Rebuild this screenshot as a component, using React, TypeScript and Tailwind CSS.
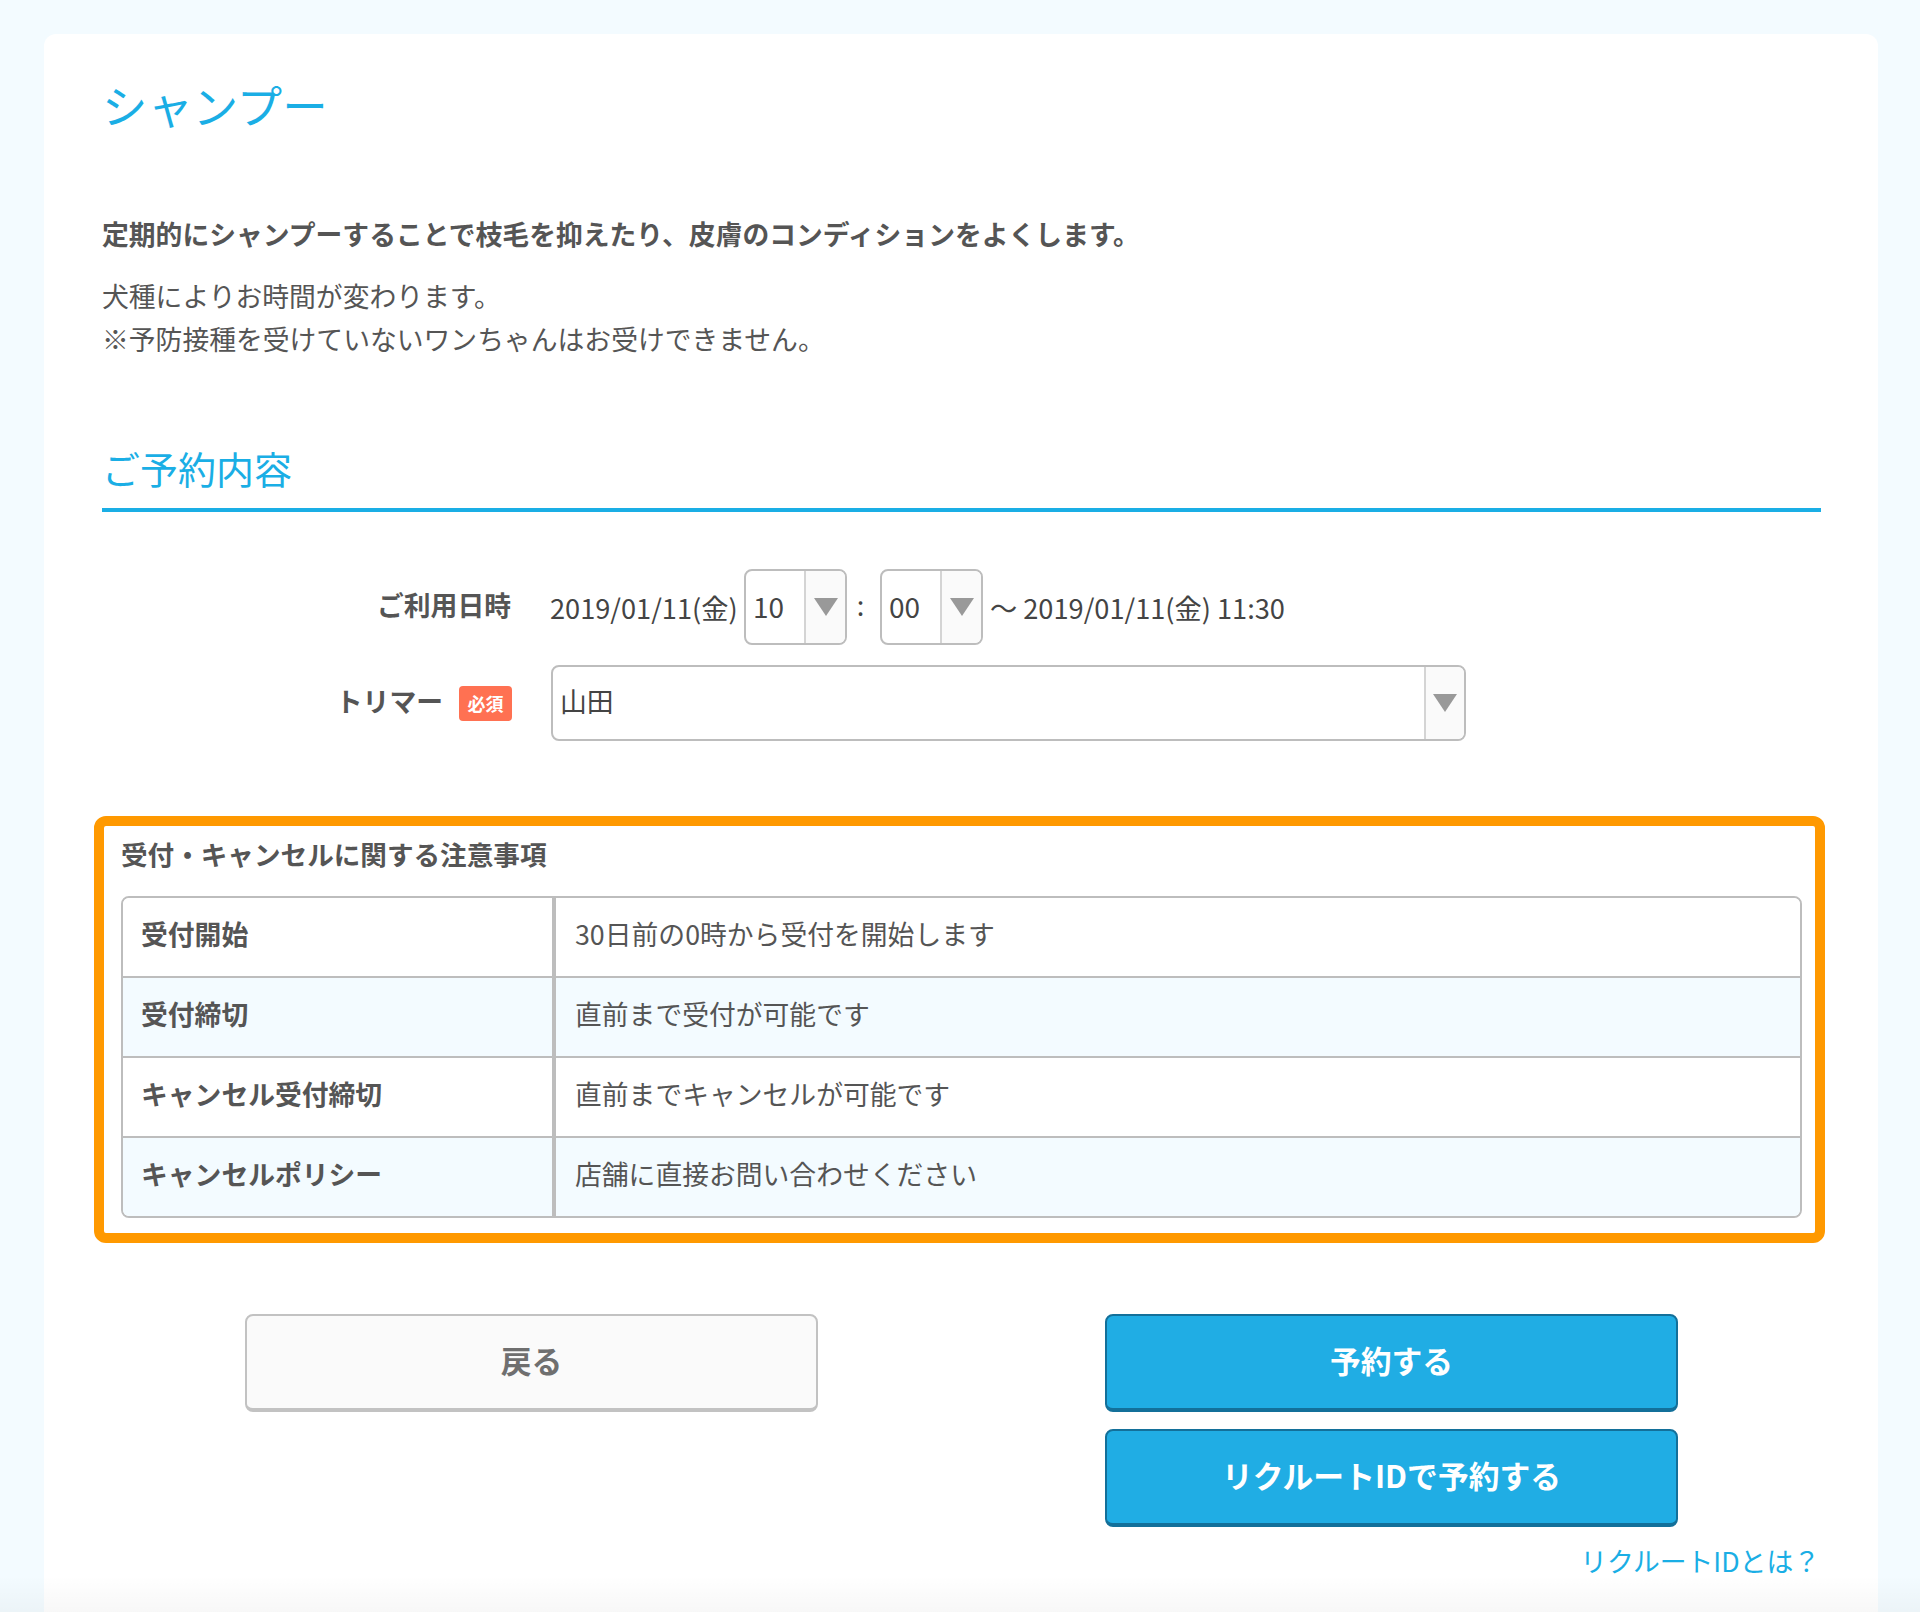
import React from 'react';

const font = '[font-family:"Noto_Sans_CJK_JP","Noto_Sans",sans-serif]';

const rows = [
  { label: '受付開始', value: '30日前の0時から受付を開始します', tint: false },
  { label: '受付締切', value: '直前まで受付が可能です', tint: true },
  { label: 'キャンセル受付締切', value: '直前までキャンセルが可能です', tint: false },
  { label: 'キャンセルポリシー', value: '店舗に直接お問い合わせください', tint: true },
];

// fake select box with the grey arrow cell on the right
const SelectBox = ({ value, width, arrow, text }: { value: string; width: string; arrow: string; text: string }) => (
  <div className={`flex h-[76px] ${width} overflow-hidden rounded-lg border-2 border-[#bdbdbd] bg-white`}>
    <div className={`flex flex-1 items-center pb-[3px] pl-[7px] ${text} text-[#444]`}>{value}</div>
    <div className={`flex ${arrow} items-center justify-center border-l-2 border-[#d4d4d4] bg-[#fafafa]`}>
      <svg width="24" height="18" viewBox="0 0 24 18">
        <path d="M0 0H24L12 18Z" fill="#999999" />
      </svg>
    </div>
  </div>
);

export default function App() {
  return (
    <div className={`relative h-[1612px] overflow-hidden bg-[#f3fbff] px-[44px] pt-[34px] text-[#555] ${font}`}>
      <div className="h-full w-[1834px] rounded-t-xl bg-white pl-[58px] pr-[57px] pt-[40px]">
        <h1 className="text-[45.4px] leading-[60px] font-normal text-[#1aaee5]">シャンプー</h1>

        <p className="mt-[78px] text-[26.8px] leading-[43px] font-bold">
          定期的にシャンプーすることで枝毛を抑えたり、皮膚のコンディションをよくします。
        </p>
        <p className="mt-[19px] text-[26.8px] leading-[43px]">
          犬種によりお時間が変わります。
          <br />
          ※予防接種を受けていないワンちゃんはお受けできません。
        </p>

        <h2 className="mt-[80px] border-b-4 border-[#1aaee5] pb-[12px] text-[38px] leading-[56px] font-normal text-[#1aaee5]">
          ご予約内容
        </h2>

        <div className="mt-[57px] flex items-center">
          <div className="w-[409px] pb-1 text-right text-[26.8px] font-bold">ご利用日時</div>
          <div className="ml-[39px] flex items-center text-[27.2px] text-[#444]">
            <span className="w-[194px]">2019/01/11(金)</span>
            <SelectBox value="10" width="w-[103px]" arrow="w-[41px]" text="text-[28px]" />
            <span className="w-[33px] pb-[6px] pr-[6px] text-center">:</span>
            <SelectBox value="00" width="w-[103px]" arrow="w-[41px]" text="text-[28px]" />
            <span className="ml-[7px]">〜 2019/01/11(金) 11:30</span>
          </div>
        </div>

        <div className="mt-[20px] flex items-center">
          <div className="flex w-[410px] items-center justify-end text-[26.8px] font-bold">
            <span className="pb-1">トリマー</span>
            <span className="ml-4 flex h-[35px] w-[53px] items-center justify-center rounded bg-[#ff7152] text-[18px] text-white">
              必須
            </span>
          </div>
          <div className="ml-[39px]">
            <SelectBox value="山田" width="w-[915px]" arrow="w-[40px]" text="text-[26.8px]" />
          </div>
        </div>

        <div className="mt-[75px] -ml-[8px] -mr-[4px] rounded-xl border-[10px] border-[#ff9900] pb-[15px] pl-[17px] pr-[13px] pt-[6px]">
          <h3 className="text-[26.6px] leading-[43px] font-bold">受付・キャンセルに関する注意事項</h3>
          <div className="mt-[21px] overflow-hidden rounded-lg border-2 border-[#bdbdbd]">
            {rows.map((row, i) => (
              <div
                key={row.label}
                className={`flex text-[26.8px] ${i > 0 ? 'h-[80px] border-t-2 border-[#bdbdbd]' : 'h-[78px]'} ${row.tint ? 'bg-[#f3fbff]' : 'bg-white'}`}
              >
                <div className="flex w-[433px] items-center border-r-4 border-[#bdbdbd] pb-[5px] pl-[18px] font-bold">{row.label}</div>
                <div className="flex flex-1 items-center pb-[5px] pl-[19px]">{row.value}</div>
              </div>
            ))}
          </div>
        </div>

        <div className="mt-[71px] ml-[143px] flex items-start gap-[287px] text-[30.8px] font-bold">
          <button className="flex h-[98px] w-[573px] items-center justify-center rounded-lg border-2 border-b-4 border-[#c2c2c2] bg-[#fafafa] pb-1 text-[#6f6f6f]">
            戻る
          </button>
          <div className="w-[573px]">
            <button className="flex h-[98px] w-full items-center justify-center rounded-lg border-2 border-b-4 border-[#13709a] bg-[#20ade4] pb-1 text-white">
              予約する
            </button>
            <button className="mt-[17px] flex h-[98px] w-full items-center justify-center rounded-lg border-2 border-b-4 border-[#13709a] bg-[#20ade4] pb-1 text-white">
              リクルートIDで予約する
            </button>
          </div>
        </div>

        <div className="mt-[12px] pr-[1px] text-right text-[26.8px] leading-[43px] text-[#1aaee5]">リクルートIDとは？</div>
      </div>

      {/* fade at the bottom edge of the page */}
      <div className="absolute inset-x-0 bottom-0 h-[36px] bg-gradient-to-b from-transparent to-black/[0.03]" />
    </div>
  );
}
